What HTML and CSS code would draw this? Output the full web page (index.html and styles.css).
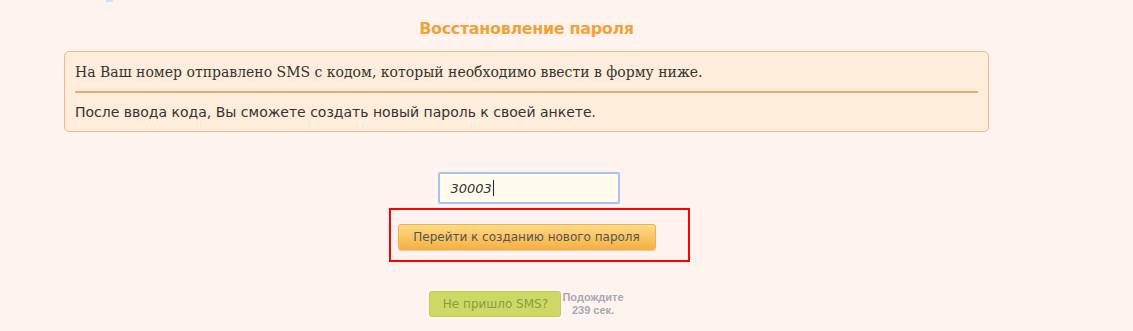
FILE: index.html
```html
<!DOCTYPE html>
<html>
    <head>
        <meta charset="utf-8">
        <title>Восстановление пароля</title>
        <link rel="stylesheet" href="styles.css">
    </head>
    <body>
        <div id="topMark"></div>
        <div id="page">
            <h1 class="title">Восстановление пароля</h1>
            <div class="notice">
                <p class="serif">На Ваш номер отправлено SMS с кодом, который необходимо ввести в форму ниже.</p>
                <hr>
                <p class="sans">После ввода кода, Вы сможете создать новый пароль к своей анкете.</p>
            </div>
            <form class="codeForm">
                <div class="codeInput">30003<span class="caret"></span></div>
                <div class="highlight">
                    <button class="btnOrange" type="button">Перейти к созданию нового пароля</button>
                </div>
                <div class="resend">
                    <button class="btnGreen" type="button">Не пришло SMS?</button>
                    <span class="wait">Подождите<br>239 сек.</span>
                </div>
            </form>
        </div>
    </body>
</html>
```

FILE: styles.css
```css
body {
    margin: 0;
    background-color: #fff3ef;
    font-family: "DejaVu Sans", Verdana, sans-serif;
}

#topMark {
    margin-left: 106px;
    width: 7px;
    height: 2px;
    background-color: #cfe3fb;
}

#page {
    margin-left: 64px;
    width: 925px;
}

.title {
    margin: 0;
    padding-top: 17px;
    height: 32px;
    text-align: center;
    font-size: 16px;
    letter-spacing: -0.35px;
    color: #f0a33a;
}

.notice {
    background-color: #ffeddc;
    border: 1px solid #efb98d;
    border-radius: 5px;
    padding: 0 10px;
    height: 79px;
}

.notice p {
    margin: 0;
    color: #333;
}

.serif {
    font-family: "DejaVu Serif", Georgia, serif;
    font-size: 14px;
    padding-top: 12px;
    height: 27px;
}

.notice hr {
    border: 0;
    border-top: 2px solid #eaa979;
    margin: 0;
}

.sans {
    font-size: 14px;
    padding-top: 11px;
}

.codeForm {
    display: flex;
    flex-direction: column;
    align-items: center;
    padding-top: 40px;
}

.codeInput {
    box-sizing: border-box;
    display: flex;
    align-items: center;
    width: 182px;
    height: 32px;
    padding-left: 11px;
    margin-left: 4px;
    border: 2px solid #a7c3f2;
    border-radius: 2px;
    background-color: #fffcee;
    font-size: 13px;
    font-style: italic;
    color: #333;
}

.caret {
    width: 1px;
    height: 16px;
    margin-left: 1px;
    background-color: #222;
}

.highlight {
    margin-top: 4px;
    margin-left: 25px;
    border: 2px solid #ff0000;
    padding: 14px 32px 10px 7px;
}

.btnOrange {
    width: 258px;
    height: 26px;
    border: 1px solid #eeb050;
    border-radius: 3px;
    background: linear-gradient(#ffda86, #f6b142);
    box-shadow: 0 1px 1px rgba(180, 130, 60, 0.4);
    font-family: "DejaVu Sans", Verdana, sans-serif;
    font-size: 12px;
    color: #555;
    padding: 0;
}

.resend {
    display: flex;
    align-items: center;
    margin-top: 29px;
}

.btnGreen {
    width: 132px;
    height: 26px;
    border: 1px solid #bfcc55;
    border-radius: 3px;
    background-color: #cdd964;
    font-family: "DejaVu Sans", Verdana, sans-serif;
    font-size: 12px;
    color: #8c9a48;
    padding: 0;
}

.wait {
    padding-left: 1px;
    text-align: center;
    font-family: "Liberation Sans", Arial, sans-serif;
    font-size: 11px;
    font-weight: bold;
    line-height: 13px;
    color: #a8a8b4;
}
```
